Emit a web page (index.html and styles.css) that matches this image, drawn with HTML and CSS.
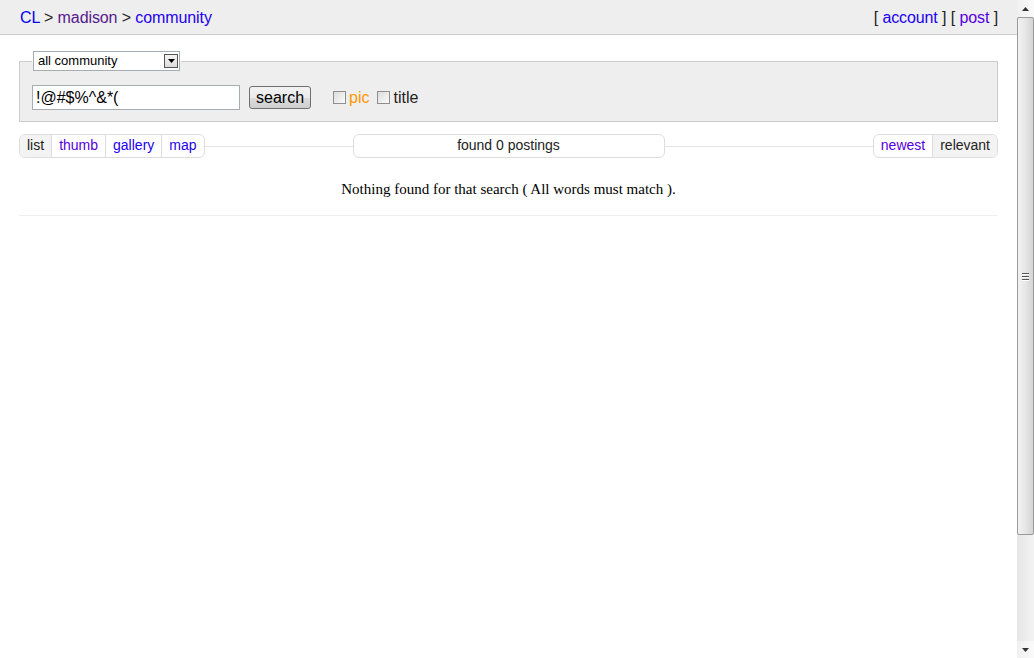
FILE: index.html
```html
<!DOCTYPE html>
<html>
<head>
<meta charset="utf-8">
<title>madison community - craigslist</title>
<link rel="stylesheet" href="styles.css">
</head>
<body>
<div class="page">
  <header class="bchead">
    <div class="crumbs">
      <a class="lnk" href="#">CL</a> &gt; <a class="lnk visited" href="#">madison</a> &gt; <a class="lnk blue2" href="#">community</a>
    </div>
    <div class="userlinks">
      [ <a class="lnk blue2" href="#">account</a> ] [ <a class="lnk purple" href="#">post</a> ]
    </div>
  </header>
  <main class="content">
    <fieldset class="searchfs">
      <legend class="catlegend">
        <div class="select">
          <span class="select-text">all community</span>
          <span class="select-btn"><svg width="7" height="4" viewBox="0 0 7 4"><path d="M0 0h7L3.5 4z" fill="#000"/></svg></span>
        </div>
      </legend>
      <div class="searchrow">
        <div class="query">!@#$%^&amp;*(</div>
        <div class="btn">search</div>
        <label class="chk"><span class="box"></span><span class="pic">pic</span></label>
        <label class="chk"><span class="box"></span><span class="title">title</span></label>
      </div>
    </fieldset>
    <div class="toolbar">
      <div class="side">
        <div class="group">
          <span class="seg sel">list</span><a class="seg lnk purple" href="#">thumb</a><a class="seg lnk blue2" href="#">gallery</a><a class="seg lnk blue2" href="#">map</a>
        </div>
        <div class="rule"></div>
      </div>
      <div class="found">found 0 postings</div>
      <div class="side">
        <div class="rule"></div>
        <div class="group">
          <a class="seg lnk purple" href="#">newest</a><span class="seg sel">relevant</span>
        </div>
      </div>
    </div>
    <p class="noresults">Nothing found for that search ( All words must match ).</p>
    <div class="hr"></div>
  </main>
</div>
<div class="scrollbar">
  <div class="sb-btn"><svg width="7" height="4" viewBox="0 0 7 4"><path d="M3.5 0L7 4H0z" fill="#333"/></svg></div>
  <div class="sb-track">
    <div class="sb-thumb"><div class="grip"><i></i><i></i><i></i></div></div>
  </div>
  <div class="sb-btn"><svg width="7" height="4" viewBox="0 0 7 4"><path d="M0 0h7L3.5 4z" fill="#333"/></svg></div>
</div>
</body>
</html>
```

FILE: styles.css
```css
html, body {
  margin: 0;
  padding: 0;
  height: 100%;
}
body {
  display: flex;
  font-family: "Liberation Sans", Arial, sans-serif;
  color: #222;
  background: #fff;
  overflow: hidden;
}
.page {
  flex: 1;
  min-width: 0;
}
.lnk {
  color: #0000ee;
  text-decoration: none;
}
.lnk.visited { color: #551a8b; }
.lnk.blue2 { color: #2200ee; }
.lnk.purple { color: #5500dd; }

.bchead {
  display: flex;
  justify-content: space-between;
  align-items: center;
  height: 35px;
  box-sizing: border-box;
  padding: 2px 19px 0 20px;
  background: #eeeeee;
  border-bottom: 1px solid #cccccc;
  font-size: 16px;
  line-height: 18px;
  letter-spacing: -0.1px;
}

.content {
  padding: 0 19px;
}
.searchfs {
  margin: 16px 0 0;
  padding: 14px 12px 11px 12px;
  border: 1px solid #cccccc;
  background: #eeeeee;
  min-width: 0;
}
.catlegend {
  padding: 0 1px;
  margin-left: 0;
}
.select {
  display: flex;
  width: 145px;
  height: 18px;
  border: 1px solid #a5acb2;
  background: #fff;
  font-size: 13px;
  line-height: 18px;
  align-items: center;
}
.select-text {
  flex: 1;
  padding-left: 4px;
  color: #000;
}
.select-btn {
  width: 14px;
  height: 14px;
  margin-right: 1px;
  border: 1px solid #555;
  background: linear-gradient(#f4f4f4, #dcdcdc);
  display: flex;
  align-items: center;
  justify-content: center;
  box-sizing: border-box;
}
.searchrow {
  display: flex;
  align-items: center;
  height: 25px;
}
.query {
  width: 203px;
  height: 23px;
  border: 1px solid #a5acb2;
  background: #fff;
  font-size: 16px;
  line-height: 23px;
  padding-left: 3px;
  color: #000;
}
.btn {
  margin-left: 9px;
  height: 21px;
  padding: 0 6px;
  border: 1px solid #707070;
  border-radius: 3px;
  background: linear-gradient(#f2f2f2 0%, #ebebeb 50%, #dddddd 51%, #cfcfcf 100%);
  font-size: 16px;
  line-height: 21px;
  color: #000;
}
.chk {
  display: flex;
  align-items: center;
  font-size: 16px;
  line-height: 18px;
  margin-left: 22px;
}
.chk + .chk { margin-left: 8px; }
.box {
  width: 11px;
  height: 11px;
  border: 1px solid #8e8f8f;
  background: linear-gradient(135deg, #dcdcdc, #fbfbfb);
  margin-right: 3px;
}
.pic { color: #ff9900; }
.title { color: #222; }

.toolbar {
  display: grid;
  grid-template-columns: 1fr 312px 1fr;
  align-items: center;
  margin-top: 12px;
  height: 24px;
  font-size: 14px;
}
.side {
  display: flex;
  align-items: center;
}
.group {
  display: flex;
  border: 1px solid #dddddd;
  border-radius: 6px;
  overflow: hidden;
  height: 22px;
}
.seg {
  padding: 0 7px;
  line-height: 21px;
  border-left: 1px solid #dddddd;
}
.seg:first-child { border-left: none; }
.seg.sel {
  background: #f3f3f3;
  color: #222;
}
.rule {
  flex: 1;
  height: 1px;
  background: #e4e4e4;
}
.found {
  height: 22px;
  line-height: 21px;
  text-align: center;
  border: 1px solid #dddddd;
  border-radius: 6px;
}
.noresults {
  margin: 23px 0 0;
  text-align: center;
  font-family: "Liberation Serif", "Times New Roman", serif;
  font-size: 15px;
  line-height: 17px;
  color: #000;
}
.hr {
  margin-top: 17px;
  height: 1px;
  background: #eeeeee;
}

.scrollbar {
  width: 17px;
  height: 100%;
  display: flex;
  flex-direction: column;
  background: linear-gradient(90deg, #e6e6e6, #f3f3f3);
}
.sb-btn {
  height: 17px;
  display: flex;
  align-items: center;
  justify-content: center;
  background: linear-gradient(90deg, #f0f0f0, #fafafa);
}
.sb-track {
  flex: 1;
}
.sb-thumb {
  height: 518px;
  border: 1px solid #9a9a9a;
  border-radius: 2px;
  background: linear-gradient(90deg, #f2f2f2 0%, #e6e6e6 50%, #d4d4d4 100%);
  display: flex;
  align-items: center;
  justify-content: center;
  box-sizing: border-box;
}
.grip {
  display: flex;
  flex-direction: column;
  gap: 2px;
}
.grip i {
  display: block;
  width: 7px;
  height: 1px;
  background: #555;
  box-shadow: 0 1px 0 #fff;
}
```
